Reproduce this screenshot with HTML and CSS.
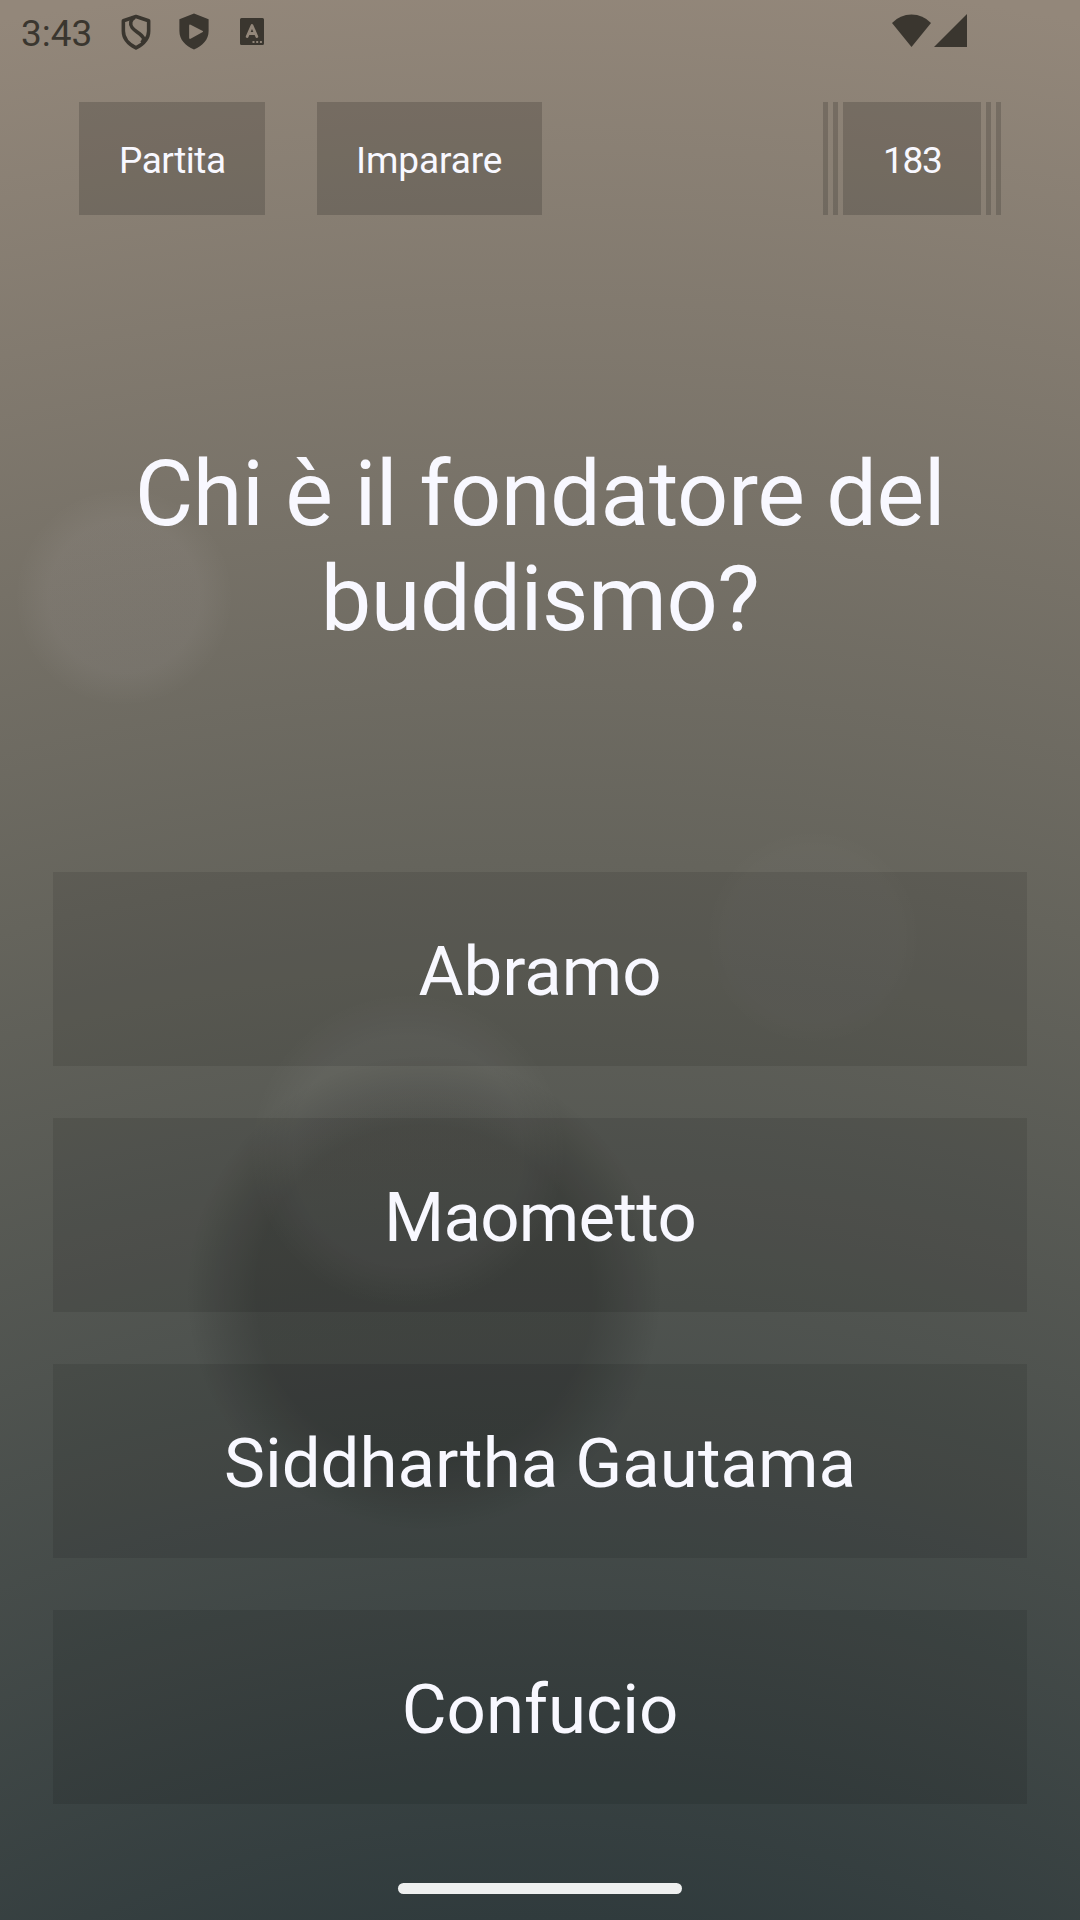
FILE: index.html
```html
<!DOCTYPE html>
<html lang="it">
<head>
<meta charset="utf-8">
<title>Quiz</title>
<link rel="stylesheet" href="styles.css">
</head>
<body>
<div class="screen">
  <header class="status">
    <span class="time">3:43</span>
    <svg class="icon shield" viewBox="0 0 32 38" fill="none" stroke="currentColor" stroke-width="3.8" stroke-linejoin="round">
      <path d="M16 2.500 29.500 7v11c0 8-5.500 14-13.500 18C8 32 2.500 26 2.500 18V7z"/>
      <path d="M14.500 3.500C10 6 9 10.500 12 14.500c3 4 10 6.500 12 11 .5 2-.5 3.500-2 5"/>
    </svg>
    <svg class="icon protect" viewBox="0 0 32 38">
      <path fill="currentColor" fill-rule="evenodd" d="M16 .5 31 6.500v12c0 9-6 15-15 19C7 33.500 1 27.500 1 18.500v-12zM11 13q0-1.500 1.500-1L25 18.500q.8.5 0 1L12.500 26.500Q11 27 11 25.500z"/>
    </svg>
    <svg class="icon keyboard" viewBox="0 0 24 27">
      <path fill="currentColor" fill-rule="evenodd" d="M1.500 0h21A1.500 1.500 0 0 1 24 1.500v24a1.500 1.500 0 0 1-1.500 1.500h-21A1.500 1.500 0 0 1 0 25.500v-24A1.500 1.500 0 0 1 1.500 0zM12.500 23v2h2v-2zm3.700 0v2h2v-2zm3.700 0v2h2v-2z"/>
      <path d="M7.200 18.500 12 7.500l4.800 11M9 15.500h6" fill="none" stroke="#93877a" stroke-width="2.800" stroke-linecap="round" stroke-linejoin="round"/>
    </svg>
    <svg class="icon signal" viewBox="0 0 76 34" fill="currentColor">
      <path d="M0 9Q8 .5 19.500.5T39 9L19.500 33z"/>
      <path d="M75 0v33H42z"/>
    </svg>
  </header>

  <nav class="toolbar">
    <button class="tool new-game">Partita</button>
    <button class="tool learn">Imparare</button>
    <div class="score">
      <i class="bar"></i><i class="bar"></i>
      <span class="tool value">183</span>
      <i class="bar"></i><i class="bar"></i>
    </div>
  </nav>

  <h1 class="question">Chi è il fondatore del buddismo?</h1>

  <main class="answers">
    <button class="answer">Abramo</button>
    <button class="answer tight">Maometto</button>
    <button class="answer">Siddhartha Gautama</button>
    <button class="answer">Confucio</button>
  </main>

  <footer class="gesture"><span class="handle"></span></footer>
</div>
</body>
</html>
```
FILE: styles.css
```css
* { box-sizing: border-box; }

body {
  margin: 0;
  font-family: Roboto, "Liberation Sans", sans-serif;
}

button {
  border: 0;
  font: inherit;
  color: inherit;
}

.screen {
  width: 1080px;
  height: 1920px;
  display: flex;
  flex-direction: column;
  color: #f8f8ff;
  background:
    radial-gradient(circle at 124px 597px, rgba(250,240,255,.05) 76px, rgba(250,240,255,0) 109px),
    radial-gradient(circle at 813px 937px, rgba(255,255,255,.014) 86px, rgba(255,255,255,0) 108px),
    radial-gradient(circle at 408px 1151px, rgba(255,255,255,.045) 115px, rgba(255,255,255,0) 158px),
    radial-gradient(circle at 424px 1293px, rgba(0,0,0,.19) 168px, rgba(0,0,0,.1) 202px, rgba(0,0,0,0) 238px),
    radial-gradient(circle at 540px 2900px, #303b3d 980px, #65645c 2040px, #93877a 2930px);
}

.status {
  height: 102px;
  display: flex;
  align-items: flex-start;
  padding: 11px 112px 0 21px;
  color: #3a362f;
}
.time { width: 100px; font-size: 37px; line-height: 45px; }
.icon { display: block; flex: none; }
.shield { width: 30px; height: 36px; margin-top: 3px; }
.protect { width: 32px; height: 37px; margin: 2px 0 0 27px; }
.keyboard { width: 24px; height: 27px; margin: 7px 0 0 30px; }
.signal { width: 76px; height: 34px; margin: 3px 0 0 auto; }

.toolbar {
  height: 113px;
  display: flex;
  gap: 52px;
  padding: 0 79px;
}
.tool {
  display: flex;
  align-items: center;
  padding: 4px 40px 0;
  font-size: 37px;
  background: rgba(0,0,0,.165);
}
.new-game { width: 186px; letter-spacing: -.5px; }
.learn { width: 225px; padding-left: 39px; letter-spacing: -.1px; }
.value { width: 138px; letter-spacing: -1.3px; }
.score { display: flex; gap: 5px; margin-left: auto; }
.bar { width: 5px; background: rgba(0,0,0,.165); }

.question {
  height: 657px;
  margin: 0;
  padding: 6px 53px 0;
  display: flex;
  align-items: center;
  text-align: center;
  font-size: 90px;
  font-weight: 400;
  line-height: 105px;
  letter-spacing: -.45px;
}

.answers { display: grid; grid-auto-rows: 194px; gap: 52px; padding: 0 53px; }
.answer { padding: 4px 0 0; font-size: 69px; background: rgba(0,0,0,.095); }
.tight { letter-spacing: -.75px; }

.gesture { flex: 1; display: flex; justify-content: center; align-items: flex-start; padding-top: 79px; }
.handle { width: 284px; height: 11px; border-radius: 6px; background: #eef0f0; }
```
